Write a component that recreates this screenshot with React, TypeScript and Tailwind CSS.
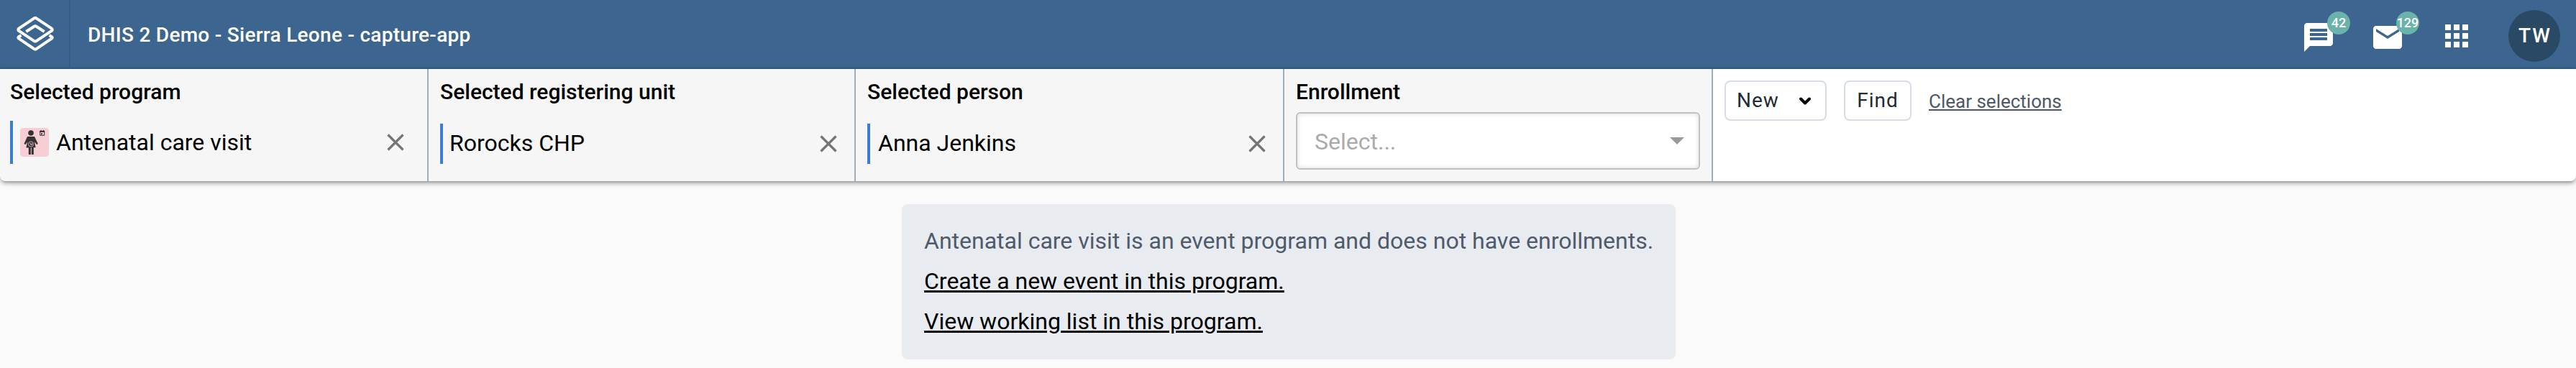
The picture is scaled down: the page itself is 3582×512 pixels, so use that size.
import type { ReactNode } from "react";
import { MdApps, MdEmail, MdMessage } from "react-icons/md";

function Logo() {
  return (
    <svg viewBox="0 0 52 48" className="h-12 w-[52px]" fill="none" stroke="#fff" strokeWidth="4" strokeLinejoin="round">
      <path d="M24.2 2.7a3 3 0 0 1 3.6 0L48.8 16.6a2 2 0 0 1 0 3.3L27.8 33.800a3 3 0 0 1-3.600 0L3.200 19.900a2 2 0 0 1 0-3.300Z" />
      <path d="M13.300 21 24.200 14a3 3 0 0 1 3.600 0L38.700 21" />
      <path d="M6.500 26.300 3.200 28q-1.800 1.300 0 2.700L24.200 44.900a3 3 0 0 0 3.600 0L48.800 30.700q1.800-1.400 0-2.700L45.500 26.300" />
    </svg>
  );
}

function ProgramIcon() {
  return (
    <svg viewBox="0 0 40 40" className="ml-[10px] size-10 shrink-0">
      <rect width="40" height="40" rx="4" fill="#f7ced3" />
      <circle cx="15" cy="7" r="3.8" fill="#333" />
      <path d="M10 12h10l4.800 10-1.600 1.200-3.200-4 1.600 8H18.800V37h-3V27.500h-1V37h-3V27.500H8.400l1.600-8-2.800 3.700L5.500 22z" fill="#333" />
      <circle cx="15" cy="22.500" r="3.600" fill="none" stroke="#e4bcc0" strokeWidth="0.800" />
      <path d="M13.200 21.500h1.500v2h2v-2.500" fill="none" stroke="#e4bcc0" strokeWidth="0.900" />
      <path d="M27.700 4.300h6v6h-6z" fill="none" stroke="#333" strokeWidth="1" />
      <path d="M27.300 4h6.800v2h-6.800zM28.500 3h1v2h-1zM32 3h1v2h-1zM29 7.300h2v2h-2z" fill="#333" />
    </svg>
  );
}

function Cross() {
  return (
    <svg viewBox="0 0 24 24" className="size-6 shrink-0" stroke="#757575" strokeWidth="3.200">
      <path d="M1.500 1.500 22.500 22.500M22.500 1.500 1.500 22.500" />
    </svg>
  );
}

function Selected({ title, className, children }: { title: string; className: string; children: ReactNode }) {
  return (
    <section className={`flex h-full flex-col border-r-2 border-[#a0adba] bg-[#f6f6f6] pt-3 ${className}`}>
      <h2 className="text-[30px] leading-10 font-medium">{title}</h2>
      {children}
    </section>
  );
}

function Badge({ children }: { children: ReactNode }) {
  return (
    <span className="absolute -top-3 left-9 flex size-8 items-center justify-center rounded-full bg-[#6ab2aa] text-[18px] leading-none font-medium">
      {children}
    </span>
  );
}

export default function App() {
  return (
    <div className="h-[512px] w-[3582px] bg-[#fafafa] font-[Roboto,sans-serif] text-black">
      <header className="flex h-24 items-center border-b-2 border-[#365c82] bg-[#3c6690] text-white">
        <div className="flex h-full w-[98px] items-center border-r-2 border-[#365c82] pl-[23px]">
          <Logo />
        </div>
        <h1 className="mt-[3px] ml-6 flex-1 text-[28px] leading-8 font-medium tracking-[0.28px]">
          DHIS 2 Demo - Sierra Leone - capture-app
        </h1>
        <div className="flex items-center pr-[22px]">
          <div className="relative mt-[10px] mr-12">
            <MdMessage className="size-12" />
            <Badge>42</Badge>
          </div>
          <div className="relative mt-[10px] mr-12">
            <MdEmail className="size-12" />
            <Badge>129</Badge>
          </div>
          <MdApps className="mt-[6px] mr-12 size-12" />
          <div className="mt-[6px] flex size-[72px] items-center justify-center rounded-full bg-[#2a4964] text-[28px] font-medium tracking-[2px]">
            <span className="-mr-[2px]">TW</span>
          </div>
        </div>
      </header>

      <div className="relative flex h-[156px] overflow-hidden rounded-b-lg bg-white shadow-[0_2px_10px_rgba(0,0,0,0.2),0_4px_4px_rgba(0,0,0,0.14),0_6px_2px_-4px_rgba(0,0,0,0.12)]">
        <Selected title="Selected program" className="w-[596px] pl-[14px]">
          <div className="mt-5 flex h-[60px] items-center border-l-4 border-[#3a7fd5] pr-8">
            <ProgramIcon />
            <span className="ml-[10px] flex-1 pb-px text-[32px]">Antenatal care visit</span>
            <Cross />
          </div>
        </Selected>
        <Selected title="Selected registering unit" className="w-[594px] pl-4">
          <div className="mt-6 flex h-14 items-center border-l-4 border-[#3a7fd5] pr-6 pl-[9px]">
            <span className="flex-1 pb-[2px] text-[32px]">Rorocks CHP</span>
            <Cross />
          </div>
        </Selected>
        <Selected title="Selected person" className="w-[596px] pl-4">
          <div className="mt-6 flex h-14 items-center border-l-4 border-[#3a7fd5] pr-6 pl-[11px]">
            <span className="flex-1 pb-[2px] text-[32px]">Anna Jenkins</span>
            <Cross />
          </div>
        </Selected>
        <Selected title="Enrollment" className="w-[596px] pr-4 pl-4">
          <div className="mt-2 flex h-20 items-center justify-between rounded-md border-2 border-[#c1c1c1] bg-white pr-5 pl-6 text-[32px] text-[#aaa] shadow-[inset_0_0_6px_rgba(0,0,0,0.15)]">
            <span className="pt-[2px]">Select...</span>
            <svg viewBox="0 0 20 10" className="h-[10px] w-5" fill="#999">
              <path d="M0 0h20L10 10z" />
            </svg>
          </div>
        </Selected>
        <div className="flex items-start gap-6 pt-4 pl-4 text-[28px] text-[#212b36]">
          <button className="flex h-14 w-[142px] items-center justify-between rounded-lg border-2 border-[#d6dde7] pr-5 pl-[15px] tracking-[1px]">
            New
            <svg viewBox="0 0 16 11" className="h-[11px] w-4" fill="none" stroke="#000" strokeWidth="4" strokeLinecap="round" strokeLinejoin="round">
              <path d="M2 2.500 8 8.500 14 2.500" />
            </svg>
          </button>
          <button className="h-14 w-[94px] rounded-lg border-2 border-[#d6dde7] tracking-[1px]">Find</button>
          <a className="pt-px text-[26px] leading-14 whitespace-nowrap text-[#4d5867] underline">Clear selections</a>
        </div>
      </div>

      <main className="flex justify-center pt-8 pl-[2px]">
        <div className="h-[216px] w-[1076px] rounded-lg bg-[#e8ebf0] pt-[23px] pl-[31px] text-[32px] leading-[56px] whitespace-nowrap">
          <p className="text-[#4f5a6a]">Antenatal care visit is an event program and does not have enrollments.</p>
          <p className="underline">Create a new event in this program.</p>
          <p className="underline">View working list in this program.</p>
        </div>
      </main>
    </div>
  );
}
